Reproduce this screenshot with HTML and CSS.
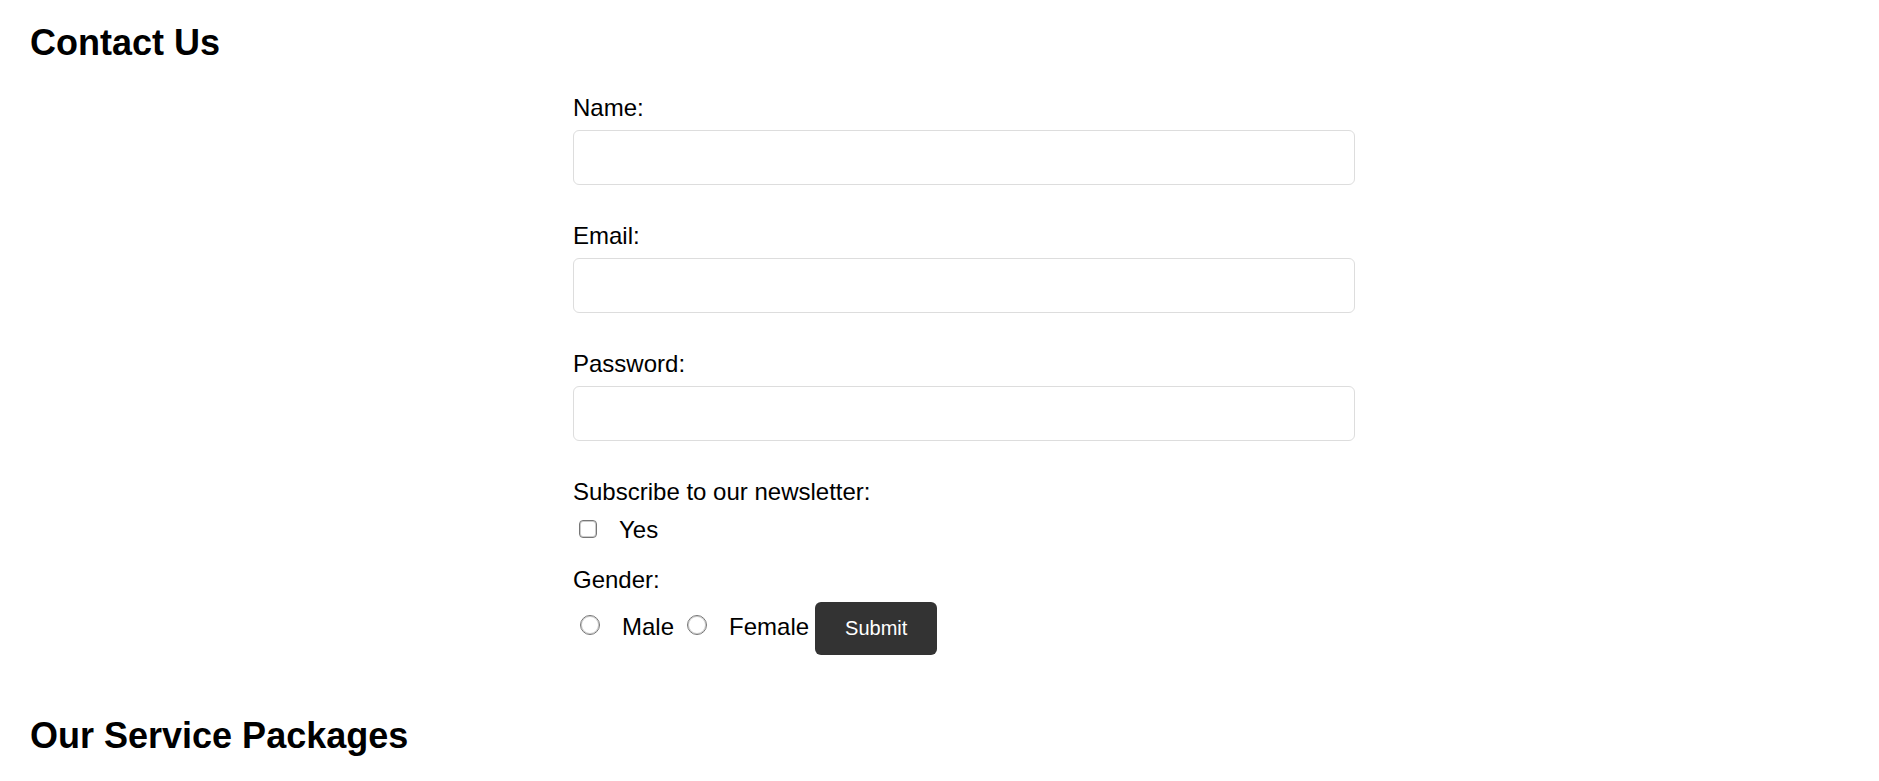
FILE: index.html
```html
<!DOCTYPE html>
<html lang="en">
<head>
<meta charset="utf-8">
<title>Contact Us</title>
<link rel="stylesheet" href="styles.css">
</head>
<body>
<main class="page">
  <section class="contact">
    <h2 class="heading">Contact Us</h2>
    <div class="form-area">
      <form class="form">
        <div class="field">
          <label class="label" for="name">Name:</label>
          <input class="text-input" type="text" id="name" name="name">
        </div>
        <div class="field">
          <label class="label" for="email">Email:</label>
          <input class="text-input" type="email" id="email" name="email">
        </div>
        <div class="field">
          <label class="label" for="password">Password:</label>
          <input class="text-input" type="password" id="password" name="password">
        </div>
        <div class="group" role="group" aria-labelledby="newsletter-label">
          <span class="label" id="newsletter-label">Subscribe to our newsletter:</span>
          <div class="options">
            <input class="check" type="checkbox" id="subscribe" name="subscribe">
            <label for="subscribe">Yes</label>
          </div>
        </div>
        <div class="group" role="radiogroup" aria-labelledby="gender-label">
          <span class="label" id="gender-label">Gender:</span>
          <div class="options">
            <input class="radio" type="radio" id="male" name="gender" value="male">
            <label for="male">Male</label>
            <input class="radio" type="radio" id="female" name="gender" value="female">
            <label for="female">Female</label>
            <button class="submit" type="submit">Submit</button>
          </div>
        </div>
      </form>
    </div>
  </section>
  <section class="packages">
    <h2 class="heading">Our Service Packages</h2>
  </section>
</main>
</body>
</html>
```
FILE: styles.css
```css
* {
  box-sizing: border-box;
}

body {
  margin: 0;
  background: #fff;
  color: #000;
  font-family: "Liberation Sans", Arial, sans-serif;
  font-size: 24px;
  line-height: 28px;
}

.page {
  display: flex;
  flex-direction: column;
  gap: 60px;
  padding: 22px 30px 0;
}

.heading {
  margin: 0;
  font-size: 36px;
  line-height: 42px;
}

.form-area {
  display: grid;
  grid-template-columns: 543fr 782fr 494fr;
  margin-top: 30px;
}

.form {
  grid-column: 2;
}

.field {
  display: flex;
  flex-direction: column;
  gap: 8px;
  margin-bottom: 37px;
}

.text-input {
  width: 100%;
  height: 55px;
  padding: 15px;
  border: 1px solid #ddd;
  border-radius: 6px;
  background: #fff;
  font: inherit;
}

.group {
  display: flex;
  flex-direction: column;
  gap: 10px;
}

.group + .group {
  gap: 8px;
  margin-top: 22px;
}

.options {
  display: flex;
  align-items: baseline;
}

.check,
.radio {
  appearance: none;
  flex: none;
  border: 1px solid #767676;
  background: #fff;
  box-shadow: inset 0 0 0 1px #ccc;
}

.check {
  width: 18px;
  height: 18px;
  margin: 0 22px 1px 6px;
  border-radius: 4px;
}

.radio {
  width: 20px;
  height: 20px;
  margin: 0 22px 0 7px;
  border-radius: 50%;
}

.check:checked,
.radio:checked {
  background: #767676;
}

.radio ~ .radio {
  margin-left: 13px;
}

.submit {
  margin-left: 6px;
  padding: 15px 30px;
  border: 0;
  border-radius: 6px;
  background: #333;
  color: #fff;
  font: inherit;
  font-size: 20px;
  line-height: 23px;
}
```
